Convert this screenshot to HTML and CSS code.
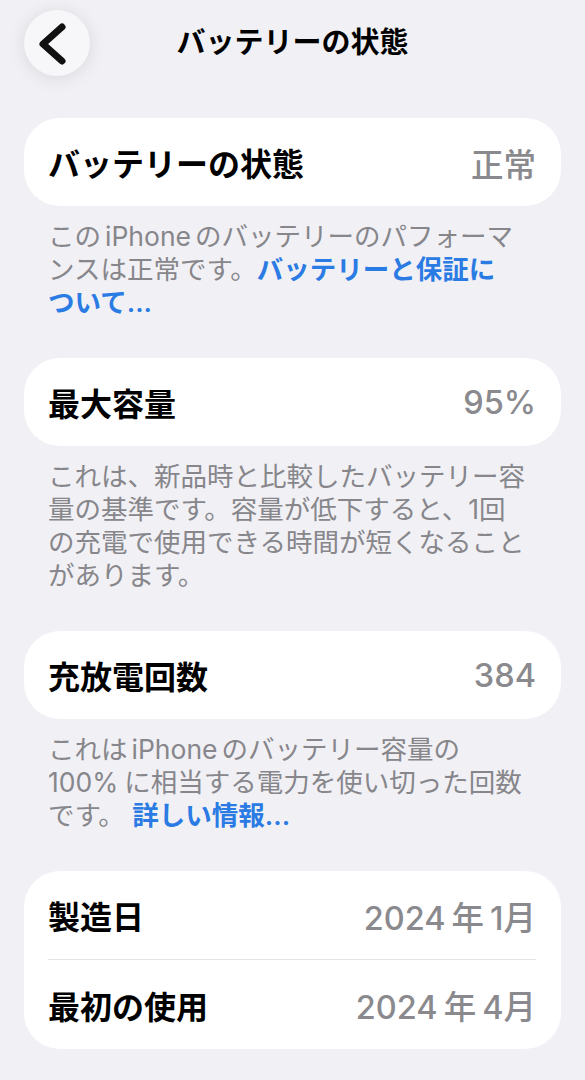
FILE: index.html
```html
<!DOCTYPE html>
<html lang="ja">
<head>
<meta charset="utf-8">
<title>バッテリーの状態</title>
<link rel="stylesheet" href="styles.css">
</head>
<body>
<div class="page">
  <header class="header">
    <button class="back" aria-label="戻る">
      <svg width="66" height="66" viewBox="0 0 66 66"><polyline points="38,17 19,34 38,51" fill="none" stroke="#111" stroke-width="7" stroke-linecap="round" stroke-linejoin="round"/></svg>
    </button>
    <h1 class="title">バッテリーの状態</h1>
    <span></span>
  </header>

  <section class="group">
    <div class="card">
      <div class="row"><span class="label">バッテリーの状態</span><span class="value">正常</span></div>
    </div>
    <p class="note">この<span class="latin">iPhone</span>のバッテリーのパフォーマ<br>ンスは正常です。<span class="link">バッテリーと保証に<br>ついて...</span></p>
  </section>

  <section class="group">
    <div class="card">
      <div class="row"><span class="label">最大容量</span><span class="value">95%</span></div>
    </div>
    <p class="note">これは、新品時と比較したバッテリー容<br>量の基準です。容量が低下すると、1回<br>の充電で使用できる時間が短くなること<br>があります。</p>
  </section>

  <section class="group">
    <div class="card">
      <div class="row"><span class="label">充放電回数</span><span class="value">384</span></div>
    </div>
    <p class="note">これは<span class="latin">iPhone</span>のバッテリー容量の<br>100%<span class="gap"></span>に相当する電力を使い切った回数<br>です。 <span class="link">詳しい情報...</span></p>
  </section>

  <section class="group">
    <div class="card">
      <div class="row"><span class="label">製造日</span><span class="value">2024<span class="gap"></span>年<span class="gap"></span>1月</span></div>
      <div class="sep"></div>
      <div class="row"><span class="label">最初の使用</span><span class="value">2024<span class="gap"></span>年<span class="gap"></span>4月</span></div>
    </div>
  </section>
</div>
</body>
</html>
```

FILE: styles.css
```css
* { box-sizing: border-box; }
html, body {
  margin: 0;
  padding: 0;
  background: #f1f0f5;
}
body {
  font-family: "Inter", "Noto Sans CJK JP", sans-serif;
  color: #000;
}
.page {
  padding: 10px 24px 0 24px;
}
.header {
  display: grid;
  grid-template-columns: 66px 1fr 66px;
  align-items: center;
  height: 66px;
  margin: 0 0 42px 0;
}
.back {
  width: 66px;
  height: 66px;
  border-radius: 50%;
  border: none;
  padding: 0;
  background: #f7f7f9;
  box-shadow: 0 2px 18px rgba(0, 0, 0, 0.1);
  display: flex;
  align-items: center;
  justify-content: center;
}
.back svg { display: block; }
.title {
  margin: 0;
  text-align: center;
  font-size: 29px;
  font-weight: 700;
  line-height: 66px;
}
.group {
  margin-bottom: 39px;
}
.card {
  background: #ffffff;
  border-radius: 36px;
  padding: 0 25px 0 24px;
}
.row {
  display: flex;
  justify-content: space-between;
  align-items: center;
  height: 88px;
}
.card .row + .sep + .row { height: 89px; }
.sep {
  height: 1px;
  background: #e3e3e7;
  margin-right: 0;
}
.label {
  font-size: 32px;
  font-weight: 700;
  color: #000;
}
.value {
  font-size: 32.5px;
  font-weight: 500;
  color: #8a8a8e;
}
.gap {
  display: inline-block;
  width: 6px;
}
.note {
  margin: 0;
  padding: 14px 24px 0 24px;
  font-size: 26.5px;
  line-height: 33px;
  color: #86868b;
}
.latin {
  margin: 0 4px;
}
.link {
  color: #2b7be4;
  font-weight: 600;
}
```
